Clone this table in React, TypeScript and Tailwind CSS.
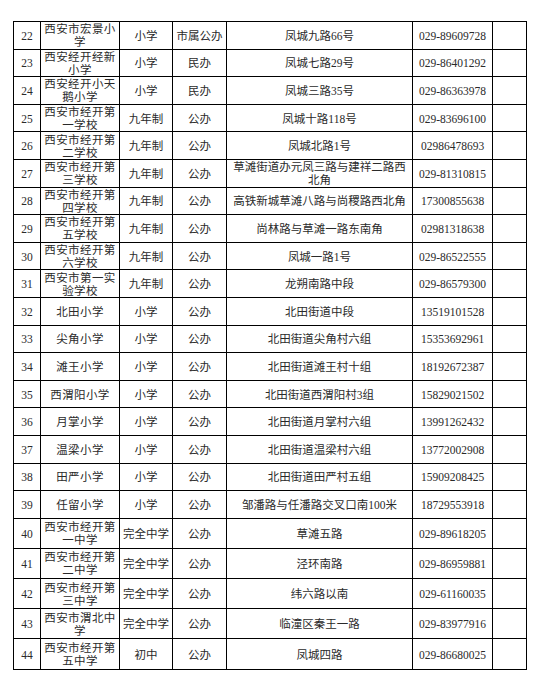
import React from "react";

type Row = [string, string, string, string, string, string];

const rows: Row[] = [
  ["22", "西安市宏景小学", "小学", "市属公办", "凤城九路66号", "029-89609728"],
  ["23", "西安经开经新小学", "小学", "民办", "凤城七路29号", "029-86401292"],
  ["24", "西安经开小天鹅小学", "小学", "民办", "凤城三路35号", "029-86363978"],
  ["25", "西安市经开第一学校", "九年制", "公办", "凤城十路118号", "029-83696100"],
  ["26", "西安市经开第二学校", "九年制", "公办", "凤城北路1号", "02986478693"],
  ["27", "西安市经开第三学校", "九年制", "公办", "草滩街道办元凤三路与建祥二路西北角", "029-81310815"],
  ["28", "西安市经开第四学校", "九年制", "公办", "高铁新城草滩八路与尚稷路西北角", "17300855638"],
  ["29", "西安市经开第五学校", "九年制", "公办", "尚林路与草滩一路东南角", "02981318638"],
  ["30", "西安市经开第六学校", "九年制", "公办", "凤城一路1号", "029-86522555"],
  ["31", "西安市第一实验学校", "九年制", "公办", "龙朔南路中段", "029-86579300"],
  ["32", "北田小学", "小学", "公办", "北田街道中段", "13519101528"],
  ["33", "尖角小学", "小学", "公办", "北田街道尖角村六组", "15353692961"],
  ["34", "滩王小学", "小学", "公办", "北田街道滩王村十组", "18192672387"],
  ["35", "西渭阳小学", "小学", "公办", "北田街道西渭阳村3组", "15829021502"],
  ["36", "月掌小学", "小学", "公办", "北田街道月掌村六组", "13991262432"],
  ["37", "温梁小学", "小学", "公办", "北田街道温梁村六组", "13772002908"],
  ["38", "田严小学", "小学", "公办", "北田街道田严村五组", "15909208425"],
  ["39", "任留小学", "小学", "公办", "邹潘路与任潘路交叉口南100米", "18729553918"],
  ["40", "西安市经开第一中学", "完全中学", "公办", "草滩五路", "029-89618205"],
  ["41", "西安市经开第二中学", "完全中学", "公办", "泾环南路", "029-86959881"],
  ["42", "西安市经开第三中学", "完全中学", "公办", "纬六路以南", "029-61160035"],
  ["43", "西安市渭北中学", "完全中学", "公办", "临潼区秦王一路", "029-83977916"],
  ["44", "西安市经开第五中学", "初中", "公办", "凤城四路", "029-86680025"],
];

const cell =
  "flex items-center justify-center text-center border-r border-black pt-[2px] overflow-visible";

const App = () => {
  return (
    <div
      className="w-[540px] h-[681px] bg-white pt-[21px] pl-[13px] text-[11.5px] leading-[13px] text-[#2a2a2a]"
      style={{ fontFamily: '"Liberation Serif", "Noto Sans CJK SC", serif' }}
    >
      <div className="w-[514px] border-t border-l border-black">
        {rows.map((r, i) => (
          <div
            key={r[0]}
            className={`flex border-b border-black ${i < 18 ? "h-[27.6px]" : "h-[30.2px]"}`}
          >
            <div className={`${cell} w-[27px]`}>{r[0]}</div>
            <div className={`${cell} w-[79px] px-[2px] tracking-[0.4px]`}>{r[1]}</div>
            <div className={`${cell} w-[53px]`}>{r[2]}</div>
            <div className={`${cell} w-[54px]`}>{r[3]}</div>
            <div className={`${cell} w-[186px] px-[3px]`}>{r[4]}</div>
            <div className={`${cell} w-[80px]`}>{r[5]}</div>
            <div className={`${cell} w-[34px]`}></div>
          </div>
        ))}
      </div>
    </div>
  );
};

export default App;
